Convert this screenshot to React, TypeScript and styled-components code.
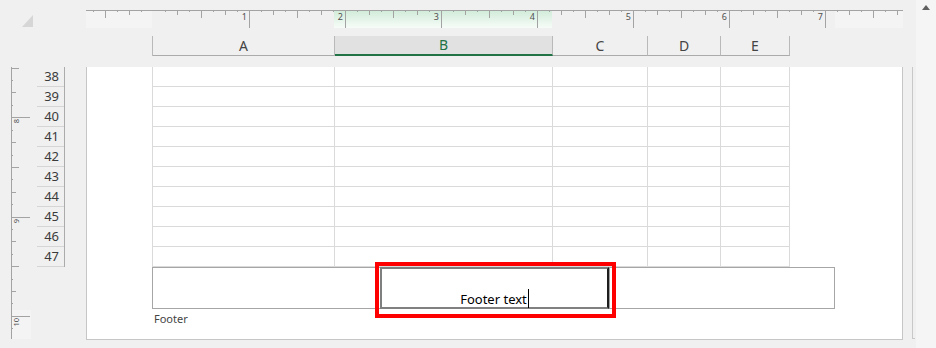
import styled, { createGlobalStyle } from "styled-components";

const GlobalStyle = createGlobalStyle`
  html, body {
    margin: 0;
    padding: 0;
  }
  body {
    width: 936px;
    height: 348px;
    overflow: hidden;
    background: #f0f0f0;
    font-family: "Noto Sans", "Liberation Sans", sans-serif;
  }
  * {
    box-sizing: border-box;
  }
`;

const COLUMNS = [
  { name: "A", width: 182 },
  { name: "B", width: 218 },
  { name: "C", width: 95 },
  { name: "D", width: 73 },
  { name: "E", width: 69 },
];
const ROWS = [38, 39, 40, 41, 42, 43, 44, 45, 46, 47];
const ACTIVE_COL = "B";

const RULER_W = 817;
const H_ZERO = 67; // inch 0 of the top ruler, from the ruler's left
const V_ZERO = 50.3; // inch 8 of the side ruler
const V_STEP = 12.4;

const Window = styled.div`
  display: flex;
  width: 936px;
  height: 348px;
  background: #f0f0f0;
`;

const Workspace = styled.div`
  flex: 1;
  display: grid;
  grid-template-columns: 86px 817px 13px;
  grid-template-rows: 36px 20px 11px 273px 8px;
`;

const Corner = styled.div`
  grid-column: 1;
  grid-row: 1;
  padding: 15px 0 0 22px;

  .tri {
    width: 0;
    height: 0;
    border-left: 11px solid transparent;
    border-bottom: 12px solid #d6d6d6;
  }
`;

const TopRuler = styled.svg`
  grid-column: 2;
  grid-row: 1;
  display: block;
  font-family: "Noto Sans", "Liberation Sans", sans-serif;
`;

const ColumnHeaders = styled.div`
  grid-column: 2;
  grid-row: 2;
  display: flex;
  margin-left: 66px;
  border-left: 1px solid #b9b9b9;
`;

const ColHead = styled.div<{ $w: number; $active?: boolean }>`
  width: ${(p) => p.$w}px;
  height: 20px;
  border-right: 1px solid #b9b9b9;
  border-bottom: ${(p) => (p.$active ? "2px solid #217346" : "1px solid #ababab")};
  background: ${(p) => (p.$active ? "#e1e1e1" : "transparent")};
  color: ${(p) => (p.$active ? "#217346" : "#444")};
  font-size: 14px;
  line-height: ${(p) => (p.$active ? 18 : 19)}px;
  text-align: center;
`;

const Gutter = styled.div`
  grid-column: 1;
  grid-row: 4;
  display: flex;
  align-items: flex-start;
  padding-left: 11px;
`;

const SideRuler = styled.svg`
  display: block;
  flex-shrink: 0;
  overflow: visible;
  font-family: "Noto Sans", "Liberation Sans", sans-serif;
`;

const RowHeaders = styled.div`
  margin-left: 6px;
  width: 28px;
  border-right: 1px solid #ababab;
`;

const RowHead = styled.div`
  height: 20px;
  border-bottom: 1px solid #d5d5d5;
  padding-right: 5px;
  text-align: right;
  font-size: 13px;
  line-height: 19px;
  color: #3b3b3b;
`;

const Page = styled.div`
  grid-column: 2;
  grid-row: 4;
  background: #fff;
  border-left: 1px solid #c6c6c6;
  border-right: 1px solid #c6c6c6;
  border-bottom: 1px solid #c6c6c6;
  padding-left: 65px;
`;

const Sheet = styled.div`
  display: grid;
  grid-template-columns: ${COLUMNS.map((c) => c.width + "px").join(" ")};
  grid-auto-rows: 20px;
  width: max-content;
  border-left: 1px solid #dadada;
`;

const Cell = styled.div`
  border-right: 1px solid #dadada;
  border-bottom: 1px solid #dadada;
`;

const FooterBox = styled.div`
  display: grid;
  grid-template-columns: 227px 229px 1fr;
  width: 683px;
  height: 42px;
  border: 1px solid #a6a6a6;
`;

const FooterSection = styled.div<{ $editing?: boolean }>`
  position: relative;
  display: flex;
  align-items: flex-end;
  justify-content: center;
  font-size: 13px;
  line-height: 16px;
  color: #000;
  ${(p) =>
    p.$editing &&
    `
    margin: -1px 0 -1px 0;
    border-top: 2px solid #7f7f7f;
    border-left: 2px solid #7f7f7f;
    border-right: 2px solid #1e1e1e;
    border-bottom: 2px solid #808080;
    box-shadow: 1px 0 0 #a0a0a0;
  `}
`;

const Caret = styled.span`
  display: inline-block;
  width: 1px;
  height: 19px;
  margin: 0 0 -1px 1px;
  background: #000;
`;

const Highlight = styled.div`
  position: absolute;
  left: -7px;
  top: -7px;
  width: 241px;
  height: 56px;
  border: 4px solid #ff0000;
  pointer-events: none;
`;

const FooterLabel = styled.div`
  margin-top: 3px;
  padding-left: 2px;
  font-size: 11px;
  line-height: 14px;
  color: #444;
`;

const EdgeColumn = styled.div`
  grid-column: 3;
  grid-row: 4;
  padding-left: 9px;

  .edge {
    width: 3px;
    height: 272px;
    border-left: 1px solid #c8c8c8;
    border-bottom: 1px solid #c8c8c8;
  }
`;

const Scrollbar = styled.div`
  width: 20px;
  background: #f5f5f5;
  display: flex;
  justify-content: center;
  padding-top: 5px;

  .up {
    width: 0;
    height: 0;
    border-left: 4px solid transparent;
    border-right: 4px solid transparent;
    border-bottom: 5px solid #606060;
  }
`;

const tickLen = (i: number, full: number) => {
  const k = ((i % 8) + 8) % 8;
  if (k === 0) return full;
  if (k === 4) return 8;
  if (k % 2 === 0) return 5;
  return 2;
};

const HorizontalRuler = () => {
  const ticks = [];
  for (let i = -5; H_ZERO + i * 12 <= RULER_W - 2; i++) {
    if (i === 0) continue;
    const x = H_ZERO + i * 12 + 0.5;
    ticks.push(<line key={i} x1={x} x2={x} y1={10} y2={10 + tickLen(i, 18)} stroke="#a3a3a3" />);
  }
  const labels = [1, 2, 3, 4, 5, 6, 7];
  return (
    <TopRuler width={RULER_W} height={30}>
      <defs>
        <linearGradient id="colsel" x1="0" y1="0" x2="0" y2="1">
          <stop offset="0" stopColor="#d2ecda" />
          <stop offset="1" stopColor="#f7fcf8" />
        </linearGradient>
      </defs>
      <rect x={0} y={11} width={66} height={17} fill="#f4f4f4" />
      <rect x={749} y={11} width={68} height={17} fill="#f4f4f4" />
      <rect x={248} y={11} width={218} height={17} fill="url(#colsel)" />
      <line x1={0} x2={RULER_W} y1={10.5} y2={10.5} stroke="#a3a3a3" />
      {ticks}
      {labels.map((n) => (
        <text key={n} x={H_ZERO + n * 96 - 2} y={20} fontSize={9} textAnchor="end" fill="#505050">
          {n}
        </text>
      ))}
    </TopRuler>
  );
};

const VerticalRuler = () => {
  const ticks = [];
  for (let i = -4; V_ZERO + i * V_STEP <= 271; i++) {
    const y = Math.round(V_ZERO + i * V_STEP) + 0.5;
    ticks.push(<line key={i} x1={0} x2={tickLen(i, 19)} y1={y} y2={y} stroke="#a3a3a3" />);
  }
  const labels = ["8", "9", "10"];
  return (
    <SideRuler width={20} height={272}>
      <rect x={1} y={243} width={19} height={29} fill="#f4f4f4" />
      <line x1={0.5} x2={0.5} y1={0} y2={272} stroke="#a3a3a3" />
      {ticks}
      {labels.map((t, n) => {
        const y = Math.round(V_ZERO + n * 8 * V_STEP) + 2;
        return (
          <text
            key={t}
            transform={`translate(8 ${y}) rotate(-90)`}
            fontSize={7.5}
            textAnchor="end"
            fill="#505050"
          >
            {t}
          </text>
        );
      })}
    </SideRuler>
  );
};

const App = () => {
  return (
    <>
      <GlobalStyle />
      <Window>
        <Workspace>
          <Corner>
            <div className="tri" />
          </Corner>
          <HorizontalRuler />
          <ColumnHeaders>
            {COLUMNS.map((c) => (
              <ColHead key={c.name} $w={c.width} $active={c.name === ACTIVE_COL}>
                {c.name}
              </ColHead>
            ))}
          </ColumnHeaders>
          <Gutter>
            <VerticalRuler />
            <RowHeaders>
              {ROWS.map((r) => (
                <RowHead key={r}>{r}</RowHead>
              ))}
            </RowHeaders>
          </Gutter>
          <Page>
            <Sheet>
              {ROWS.map((r) => COLUMNS.map((c) => <Cell key={r + c.name} />))}
            </Sheet>
            <FooterBox>
              <FooterSection />
              <FooterSection $editing>
                <span>Footer text</span>
                <Caret />
                <Highlight />
              </FooterSection>
              <FooterSection />
            </FooterBox>
            <FooterLabel>Footer</FooterLabel>
          </Page>
          <EdgeColumn>
            <div className="edge" />
          </EdgeColumn>
        </Workspace>
        <Scrollbar>
          <div className="up" />
        </Scrollbar>
      </Window>
    </>
  );
};

export default App;
